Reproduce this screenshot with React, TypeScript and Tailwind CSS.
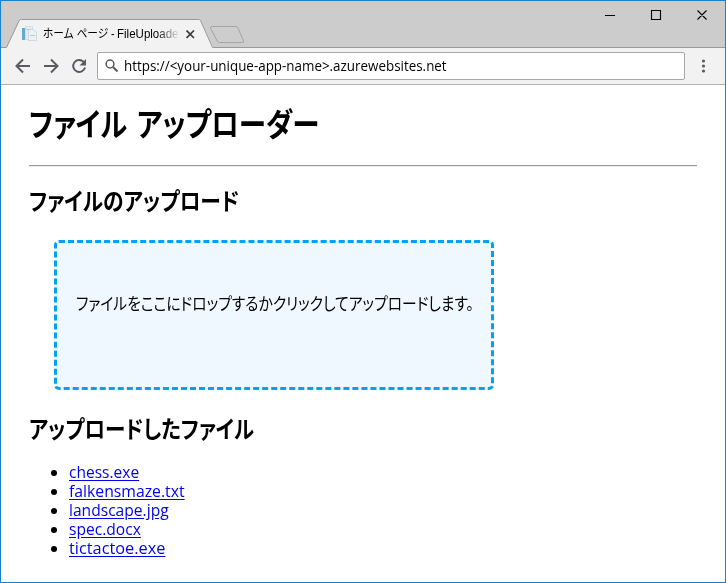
import type { ReactNode } from "react";

const files = [
  { name: "chess.exe", fit: "scale-x-[0.97]" },
  { name: "falkensmaze.txt", fit: "scale-x-[0.985]" },
  { name: "landscape.jpg", fit: "scale-x-[0.975]" },
  { name: "spec.docx", fit: "scale-x-[0.975]" },
  { name: "tictactoe.exe", fit: "scale-x-[1.02]" },
];

const kana = "font-['Noto_Sans_CJK_JP',sans-serif] [font-feature-settings:'palt']";

function Fit({ className, children }: { className: string; children: ReactNode }) {
  return <span className={`inline-block origin-left whitespace-nowrap ${className}`}>{children}</span>;
}

function TabStrip() {
  return (
    <div className="relative h-[47px] bg-[#cccccc]">
      <svg className="absolute inset-0" width="724" height="47" viewBox="1 1 724 47" fill="none">
        <path d="M1 47.5H6.5L19.5 20.5Q20 19.5 21.5 19.5H198.5Q200 19.5 200.5 20.5L213 47.5H725V48H1Z" fill="#f2f2f2" />
        <path d="M1 47.5H6.5L19.2 20.5Q19.8 19.5 21.5 19.5H198.5Q200 19.5 200.5 20.5L212.5 47.5H725" stroke="#999" />
        <path d="M212 26.5H236Q237.500 26.500 238 28L243.500 41Q244 42.500 242.500 42.500H219.500Q218 42.500 217.300 41L210.700 28.500Q210 26.500 212 26.500Z" fill="#cdcdcd" stroke="#a5a5a5" />
        <path d="M605 15.500H615M651.500 10.500H660.500V19.500H651.500ZM697.500 10.500L706.500 19.500M706.500 10.500L697.500 19.500" stroke="#000" strokeWidth="1.1" />
      </svg>
      <div className="relative flex h-full items-start pl-[20px] pt-[24px]">
        <svg width="17" height="17" viewBox="0 0 17 17" fill="none">
          <path d="M4.500 1.500H11.500V14.500H4.500Z" fill="#e6ecf1" stroke="#d5dee5" />
          <path d="M1 3H4V15H1Z" fill="#65a9d5" />
          <path d="M7.500 4.500H12L15.500 7.500V15.500H7.500Z" fill="#edf1f4" stroke="#cfd8df" />
          <path d="M5 4.500H9M9 10.500H14" stroke="#b9c9d4" />
        </svg>
        <div className="ml-[5px] flex h-[20px] w-[137px] font-['Liberation_Sans','Noto_Sans_CJK_JP',sans-serif] text-[12px] leading-[18px] text-black [font-feature-settings:'palt'] [mask-image:linear-gradient(to_right,black_114px,transparent_137px)]">
          <span className="w-[74px] shrink-0">
            <Fit className="scale-x-[0.89]">ホーム ページ -</Fit>
          </span>
          <Fit className="scale-x-[0.96]">FileUploade</Fit>
        </div>
        <svg className="ml-[6px] mt-[5px]" width="9" height="9" viewBox="0 0 9 9" fill="none">
          <path d="M0.500 0.500L8 8M8 0.500L0.500 8" stroke="#3c3c3c" strokeWidth="1.700" />
        </svg>
      </div>
    </div>
  );
}

function Toolbar() {
  return (
    <div className="flex h-[37px] items-center border-b border-[#b0b0b0] bg-[#f2f2f2]">
      <svg className="shrink-0" width="96" height="36" viewBox="1 48 96 36" fill="none" stroke="#5a5a60" strokeWidth="2">
        <path d="M30 66H17M23 59.500L16.500 66L23 72.500M44 66H57M51 59.500L57.500 66L51 72.500" />
        <path d="M83.500 61.800A6 6 0 1 0 85 67.500" />
        <path d="M86 59V65.500H79.500Z" fill="#5a5a60" stroke="none" />
      </svg>
      <div className="flex h-[28px] w-[588px] shrink-0 items-center rounded-[2px] border border-[#a6a6a6] bg-white pl-[7px]">
        <svg width="14" height="14" viewBox="0 0 14 14" fill="none" stroke="#5a5a5a">
          <circle cx="5" cy="5" r="3.900" strokeWidth="1.500" />
          <path d="M8 8L12.500 12.500" strokeWidth="2" />
        </svg>
        <span className="ml-[5px] font-['Open_Sans',sans-serif] text-[14px] leading-[20px] text-black">
          <Fit className="scale-x-[0.957]">https://&lt;your-unique-app-name&gt;.azurewebsites.net</Fit>
        </span>
      </div>
      <svg className="ml-[16px]" width="5" height="14" viewBox="0 0 5 14" fill="#5a5a60">
        <circle cx="2.500" cy="2" r="1.600" />
        <circle cx="2.500" cy="7" r="1.600" />
        <circle cx="2.500" cy="12" r="1.600" />
      </svg>
    </div>
  );
}

export default function App() {
  return (
    <div className="flex h-[583px] w-[726px] flex-col overflow-hidden border border-[#1a80d4] bg-white text-black">
      <TabStrip />
      <Toolbar />
      <main className="flex flex-col px-[28px]">
        <h1 className={`mt-[13px] h-[48px] text-[32px] font-bold leading-[48px] ${kana}`}>
          <Fit className="scale-x-[0.86] [word-spacing:4px]">ファイル アップローダー</Fit>
        </h1>
        <div className="mt-[19px] h-[2px] border-b border-t border-b-[#eeeeee] border-t-[#999999]" />
        <h2 className={`mt-[15px] h-[36px] text-[24px] font-bold leading-[36px] ${kana}`}>
          <Fit className="scale-x-[0.865]">ファイルのアップロード</Fit>
        </h2>
        <div className={`ml-[25px] mt-[22px] h-[150px] w-[440px] rounded-[5px] border-[3px] border-dashed border-[#03a0f3] bg-[#eff7ff] pl-[19px] pt-[48px] text-[17px] leading-[24px] ${kana}`}>
          <Fit className="scale-x-[0.869]">ファイルをここにドロップするかクリックしてアップロードします。</Fit>
        </div>
        <h2 className={`mt-[20px] h-[36px] text-[24px] font-bold leading-[36px] ${kana}`}>
          <Fit className="scale-x-[0.855]">アップロードしたファイル</Fit>
        </h2>
        <ul className="mt-[17px] list-disc pl-[40px] font-['Open_Sans',sans-serif] text-[16px] leading-[19px]">
          {files.map((file) => (
            <li key={file.name} className="h-[19px]">
              <a href="#" className={`inline-block origin-left text-[#0000ee] underline underline-offset-2 ${file.fit}`}>{file.name}</a>
            </li>
          ))}
        </ul>
      </main>
    </div>
  );
}
